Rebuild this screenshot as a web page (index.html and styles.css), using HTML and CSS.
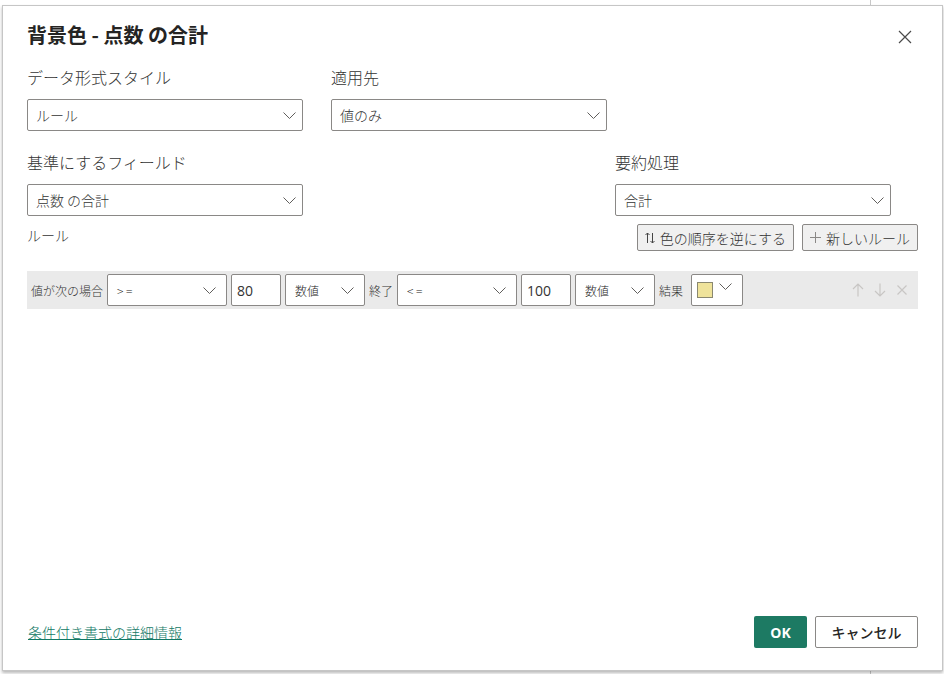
FILE: index.html
```html
<!DOCTYPE html>
<html lang="ja">
<head>
<meta charset="utf-8">
<title>背景色 - 点数 の合計</title>
<link rel="stylesheet" href="styles.css">
</head>
<body>
<div class="dialog">
  <div class="title-row">
    <h1 class="title">背景色 - 点数 の合計</h1>
    <button class="close" aria-label="閉じる">
      <svg width="14" height="14" viewBox="0 0 14 14"><path d="M1 1L13 13M13 1L1 13" stroke="#4a4a4a" stroke-width="1.2" fill="none"/></svg>
    </button>
  </div>

  <div class="fields row1">
    <div class="field">
      <div class="label">データ形式スタイル</div>
      <div class="dropdown"><span>ルール</span><svg class="chev" width="13" height="7" viewBox="0 0 13 7"><path d="M0.5 0.5L6.5 6.5L12.5 0.5" stroke="#605e5c" fill="none"/></svg></div>
    </div>
    <div class="field">
      <div class="label">適用先</div>
      <div class="dropdown"><span>値のみ</span><svg class="chev" width="13" height="7" viewBox="0 0 13 7"><path d="M0.5 0.5L6.5 6.5L12.5 0.5" stroke="#605e5c" fill="none"/></svg></div>
    </div>
  </div>

  <div class="fields row2">
    <div class="field">
      <div class="label">基準にするフィールド</div>
      <div class="dropdown"><span>点数 の合計</span><svg class="chev" width="13" height="7" viewBox="0 0 13 7"><path d="M0.5 0.5L6.5 6.5L12.5 0.5" stroke="#605e5c" fill="none"/></svg></div>
    </div>
    <div class="field">
      <div class="label">要約処理</div>
      <div class="dropdown"><span>合計</span><svg class="chev" width="13" height="7" viewBox="0 0 13 7"><path d="M0.5 0.5L6.5 6.5L12.5 0.5" stroke="#605e5c" fill="none"/></svg></div>
    </div>
  </div>

  <div class="rules-head">
    <div class="rules-label">ルール</div>
    <div class="actions">
      <button class="btn"><svg width="10" height="12" viewBox="0 0 10 12"><path d="M2.5 11V1M0.5 3L2.5 1L4.5 3M7.5 1V11M5.5 9L7.5 11L9.5 9" stroke="#444" stroke-width="1" fill="none"/></svg>色の順序を逆にする</button>
      <button class="btn"><svg width="11" height="11" viewBox="0 0 11 11"><path d="M5.5 0V11M0 5.5H11" stroke="#8a8886" stroke-width="1" fill="none"/></svg>新しいルール</button>
    </div>
  </div>

  <div class="rule">
    <span class="rtext">値が次の場合</span>
    <div class="sel op"><span>&gt; =</span><svg class="chev" width="13" height="7" viewBox="0 0 13 7"><path d="M0.5 0.5L6.5 6.5L12.5 0.5" stroke="#605e5c" fill="none"/></svg></div>
    <div class="inp">80</div>
    <div class="sel typ"><span>数値</span><svg class="chev" width="13" height="7" viewBox="0 0 13 7"><path d="M0.5 0.5L6.5 6.5L12.5 0.5" stroke="#605e5c" fill="none"/></svg></div>
    <span class="rtext">終了</span>
    <div class="sel op"><span>&lt; =</span><svg class="chev" width="13" height="7" viewBox="0 0 13 7"><path d="M0.5 0.5L6.5 6.5L12.5 0.5" stroke="#605e5c" fill="none"/></svg></div>
    <div class="inp">100</div>
    <div class="sel typ"><span>数値</span><svg class="chev" width="13" height="7" viewBox="0 0 13 7"><path d="M0.5 0.5L6.5 6.5L12.5 0.5" stroke="#605e5c" fill="none"/></svg></div>
    <span class="rtext result">結果</span>
    <div class="color"><span class="swatch"></span><svg class="chev" width="13" height="7" viewBox="0 0 13 7"><path d="M0.5 0.5L6.5 6.5L12.5 0.5" stroke="#605e5c" fill="none"/></svg></div>
    <div class="row-icons">
      <svg width="12" height="14" viewBox="0 0 12 14"><path d="M6 13.5V1M1 6L6 1L11 6" stroke="#c8c6c4" stroke-width="1.2" fill="none"/></svg>
      <svg width="12" height="14" viewBox="0 0 12 14"><path d="M6 0.5V13M1 8L6 13L11 8" stroke="#c8c6c4" stroke-width="1.2" fill="none"/></svg>
      <svg width="12" height="14" viewBox="0 0 12 14"><path d="M1.5 2.5L10.5 11.5M10.5 2.5L1.5 11.5" stroke="#c8c6c4" stroke-width="1.2" fill="none"/></svg>
    </div>
  </div>

  <div class="spacer"></div>

  <div class="footer">
    <a class="link" href="#">条件付き書式の詳細情報</a>
    <div class="footer-btns">
      <button class="ok">OK</button>
      <button class="cancel">キャンセル</button>
    </div>
  </div>
</div>
</body>
</html>
```

FILE: styles.css
```css
* { box-sizing: border-box; }

html, body {
  margin: 0;
  padding: 0;
}

body {
  width: 944px;
  height: 674px;
  overflow: hidden;
  background: #ffffff linear-gradient(#c8c8c8, #c8c8c8) 870px 0 / 1px 100% no-repeat;
  font-family: "Noto Sans CJK JP", "Noto Sans", sans-serif;
  font-weight: 300;
  color: #252423;
}

.dialog {
  margin: 5px 1px 0 2px;
  width: 941px;
  height: 666px;
  background: #fff;
  border: 1px solid #c6c6c6;
  box-shadow: 0 2px 3px rgba(0, 0, 0, 0.28);
  padding: 15px 24px 22px 24px;
  display: flex;
  flex-direction: column;
}

.title-row {
  display: flex;
  justify-content: space-between;
  align-items: center;
  height: 28px;
}

.title {
  margin: 0;
  font-size: 20px;
  font-weight: 700;
  line-height: 28px;
  color: #252423;
}

.close {
  border: 0;
  background: none;
  padding: 0;
  width: 14px;
  height: 14px;
  margin-right: 6px;
  margin-top: 3px;
  display: flex;
}

.fields {
  display: flex;
}

.row1 {
  margin-top: 17px;
  gap: 28px;
}

.row2 {
  margin-top: 20px;
  justify-content: space-between;
  padding-right: 27px;
}

.field {
  width: 276px;
}

.label {
  font-size: 16px;
  line-height: 22px;
  height: 22px;
  margin-bottom: 11px;
  color: #333;
}

.dropdown {
  height: 32px;
  border: 1px solid #8a8886;
  border-radius: 2px;
  display: flex;
  align-items: center;
  justify-content: space-between;
  padding: 0 6px 0 8px;
  font-size: 14px;
  color: #333;
}

.rules-head {
  margin-top: 8px;
  display: flex;
  justify-content: space-between;
  align-items: flex-start;
}

.rules-label {
  font-size: 14px;
  line-height: 20px;
  margin-top: 1px;
  color: #333;
}

.actions {
  display: flex;
  gap: 8px;
}

.btn {
  height: 27px;
  border: 1px solid #8a8886;
  border-radius: 2px;
  background: #f0f0f0;
  font-family: inherit;
  font-weight: 300;
  font-size: 14px;
  color: #333;
  padding: 0 7px 0 7px;
  display: flex;
  align-items: center;
  gap: 5px;
  line-height: 1;
}

.rule {
  margin-top: 20px;
  height: 38px;
  background: #eaeaea;
  display: flex;
  align-items: center;
  gap: 4px;
  padding: 0 10px 0 4px;
}

.rtext {
  font-size: 12px;
  color: #333;
  white-space: nowrap;
}

.rtext.result {
  margin-right: 4px;
}

.sel, .inp, .color {
  height: 32px;
  background: #fff;
  border: 1px solid #8a8886;
  border-radius: 2px;
  display: flex;
  align-items: center;
  flex: none;
}

.sel {
  justify-content: space-between;
  padding: 0 10px 0 9px;
}

.sel.op {
  width: 120px;
  font-size: 12px;
}

.sel.typ {
  width: 80px;
  font-size: 12px;
}

.inp {
  width: 50px;
  padding-left: 5px;
  font-size: 14px;
  font-family: "Open Sans", "Noto Sans", sans-serif;
  font-weight: 400;
  color: #333;
}

.color {
  width: 52px;
  padding: 0 10px 0 5px;
  justify-content: space-between;
}

.color .chev {
  margin-top: -8px;
}

.swatch {
  width: 16px;
  height: 16px;
  background: #efe39b;
  border: 1px solid #8a8870;
}

.row-icons {
  margin-left: auto;
  display: flex;
  gap: 10px;
}

.spacer {
  flex: 1;
}

.footer {
  display: flex;
  justify-content: space-between;
  align-items: center;
}

.link {
  font-size: 14px;
  color: #117865;
  text-decoration: underline;
  margin-left: 1px;
}

.footer-btns {
  display: flex;
  gap: 8px;
}

.ok {
  width: 53px;
  height: 32px;
  background: #1d7a63;
  color: #fff;
  border: 0;
  border-radius: 2px;
  font-family: "Open Sans", "Noto Sans", sans-serif;
  font-weight: 700;
  font-size: 14px;
}

.cancel {
  width: 103px;
  height: 32px;
  background: #fff;
  border: 1px solid #8a8886;
  border-radius: 2px;
  font-family: inherit;
  font-size: 14px;
  font-weight: 500;
  color: #252423;
}
```
